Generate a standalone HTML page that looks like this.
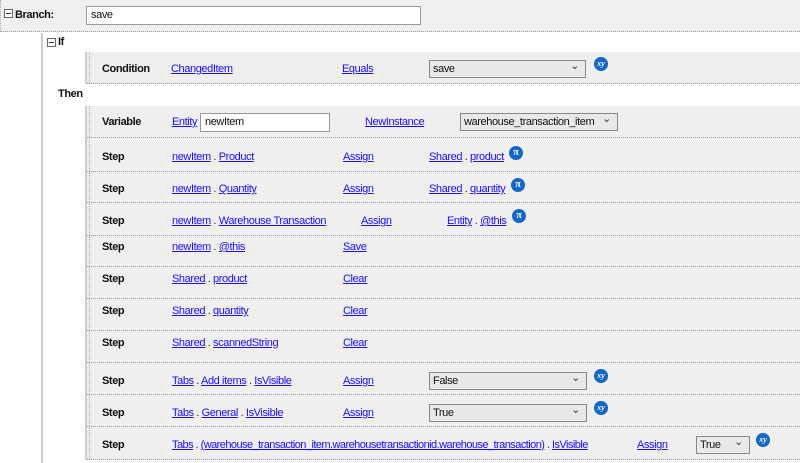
<!DOCTYPE html>
<html><head><meta charset="utf-8"><style>
*{margin:0;padding:0;box-sizing:border-box}
body{width:800px;height:463px;overflow:hidden;background:#fff;font-family:"Liberation Sans",Arial,sans-serif;font-size:11px;letter-spacing:-0.4px;color:#222;position:relative}
.a{position:absolute;white-space:nowrap;line-height:14px}
a{color:#1a0dff;text-decoration:underline}
b{font-weight:bold;color:#111}
.row{position:absolute;left:85px;right:0;background:#efefef;border-left:2px solid #ccc;border-bottom:1px dotted #999}
.row:before{content:"";position:absolute;left:2px;top:0;bottom:0;border-left:1px dotted #aaa}
.sel{position:absolute;height:18px;background:#e9e9ec;border:1px solid #888;line-height:16px;padding-left:3px;font-size:11px;color:#111}
.sel:after{content:"⌄";position:absolute;right:6px;top:-3px;font-size:11px;color:#333}
.inp{position:absolute;height:19px;background:#fff;border:1px solid #999;line-height:17px;padding-left:4px;color:#111}
.ic{position:absolute;width:14px;height:14px;border-radius:50%;background:#1466c8;color:#fff;font-size:8px;font-weight:bold;text-align:center;line-height:13px;font-family:"Liberation Serif",serif;font-style:italic;letter-spacing:0}
.pi{font-style:normal;font-size:10px;line-height:13px}
.box{position:absolute;width:9px;height:9px;border:1px solid #666;background:#fff}
.box:after{content:"";position:absolute;left:1px;right:1px;top:3px;height:1px;background:#333}
</style></head><body>
<div style="position:absolute;left:0;top:0;width:800px;height:32px;background:#f0f0f0;border-bottom:1px dotted #999;border-left:1px dotted #aaa"></div>
<div class="box" style="left:4px;top:9px"></div>
<div class="a" style="left:15px;top:8px"><b>Branch:</b></div>
<div class="inp" style="left:86px;top:6px;width:335px">save</div>
<div style="position:absolute;left:41px;top:33px;width:2px;height:430px;background:#ccc"></div>
<div class="box" style="left:47px;top:38px"></div>
<div class="a" style="left:58px;top:35px"><b>If</b></div>
<div class="row" style="top:52px;height:32px"></div>
<div class="a" style="left:102px;top:62px"><b>Condition</b></div>
<div class="a" style="left:171px;top:62px"><a>ChangedItem</a></div>
<div class="a" style="left:342px;top:62px"><a>Equals</a></div>
<div class="sel" style="left:429px;top:60px;width:157px">save</div>
<div class="ic" style="left:594px;top:57px">xy</div>
<div class="a" style="left:58px;top:87px"><b>Then</b></div>

<div class="row" style="top:106px;height:32px"></div>
<div class="a" style="left:102px;top:115px"><b>Variable</b></div>
<div class="a" style="left:172px;top:115px"><a>Entity</a></div>
<div class="inp" style="left:200px;top:113px;width:130px">newItem</div>
<div class="a" style="left:365px;top:115px"><a>NewInstance</a></div>
<div class="sel" style="left:460px;top:113px;width:158px">warehouse_transaction_item</div>

<div class="row" style="top:138px;height:34px"></div>
<div class="row" style="top:172px;height:31px"></div>
<div class="row" style="top:203px;height:33px"></div>
<div class="row" style="top:236px;height:31px"></div>
<div class="row" style="top:267px;height:32px"></div>
<div class="row" style="top:299px;height:32px"></div>
<div class="row" style="top:331px;height:32px"></div>
<div class="row" style="top:363px;height:32px"></div>
<div class="row" style="top:395px;height:32px"></div>
<div class="row" style="top:427px;height:33px"></div>

<div class="a" style="left:102px;top:150px"><b>Step</b></div>
<div class="a" style="left:172px;top:150px"><a>newItem</a> . <a>Product</a></div>
<div class="a" style="left:343px;top:150px"><a>Assign</a></div>
<div class="a" style="left:429px;top:150px"><a>Shared</a> . <a>product</a></div>
<div class="ic pi" style="left:509px;top:146px">π</div>

<div class="a" style="left:102px;top:182px"><b>Step</b></div>
<div class="a" style="left:172px;top:182px"><a>newItem</a> . <a>Quantity</a></div>
<div class="a" style="left:343px;top:182px"><a>Assign</a></div>
<div class="a" style="left:429px;top:182px"><a>Shared</a> . <a>quantity</a></div>
<div class="ic pi" style="left:511px;top:178px">π</div>

<div class="a" style="left:102px;top:214px"><b>Step</b></div>
<div class="a" style="left:172px;top:214px"><a>newItem</a> . <a>Warehouse Transaction</a></div>
<div class="a" style="left:361px;top:214px"><a>Assign</a></div>
<div class="a" style="left:447px;top:214px"><a>Entity</a> . <a>@this</a></div>
<div class="ic pi" style="left:512px;top:209px">π</div>

<div class="a" style="left:102px;top:240px"><b>Step</b></div>
<div class="a" style="left:172px;top:240px"><a>newItem</a> . <a>@this</a></div>
<div class="a" style="left:343px;top:240px"><a>Save</a></div>

<div class="a" style="left:102px;top:272px"><b>Step</b></div>
<div class="a" style="left:172px;top:272px"><a>Shared</a> . <a>product</a></div>
<div class="a" style="left:343px;top:272px"><a>Clear</a></div>

<div class="a" style="left:102px;top:304px"><b>Step</b></div>
<div class="a" style="left:172px;top:304px"><a>Shared</a> . <a>quantity</a></div>
<div class="a" style="left:343px;top:304px"><a>Clear</a></div>

<div class="a" style="left:102px;top:336px"><b>Step</b></div>
<div class="a" style="left:172px;top:336px"><a>Shared</a> . <a>scannedString</a></div>
<div class="a" style="left:343px;top:336px"><a>Clear</a></div>

<div class="a" style="left:102px;top:374px"><b>Step</b></div>
<div class="a" style="left:172px;top:374px"><a>Tabs</a> . <a>Add items</a> . <a>IsVisible</a></div>
<div class="a" style="left:343px;top:374px"><a>Assign</a></div>
<div class="sel" style="left:429px;top:372px;width:158px">False</div>
<div class="ic" style="left:594px;top:369px">xy</div>

<div class="a" style="left:102px;top:406px"><b>Step</b></div>
<div class="a" style="left:172px;top:406px"><a>Tabs</a> . <a>General</a> . <a>IsVisible</a></div>
<div class="a" style="left:343px;top:406px"><a>Assign</a></div>
<div class="sel" style="left:429px;top:404px;width:158px">True</div>
<div class="ic" style="left:594px;top:401px">xy</div>

<div class="a" style="left:102px;top:438px"><b>Step</b></div>
<div class="a" style="left:172px;top:438px;letter-spacing:-0.55px"><a>Tabs</a> . <a>(warehouse_transaction_item.warehousetransactionid.warehouse_transaction)</a> . <a>IsVisible</a></div>
<div class="a" style="left:637px;top:438px"><a>Assign</a></div>
<div class="sel" style="left:696px;top:436px;width:54px">True</div>
<div class="ic" style="left:756px;top:433px">xy</div>
</body></html>
